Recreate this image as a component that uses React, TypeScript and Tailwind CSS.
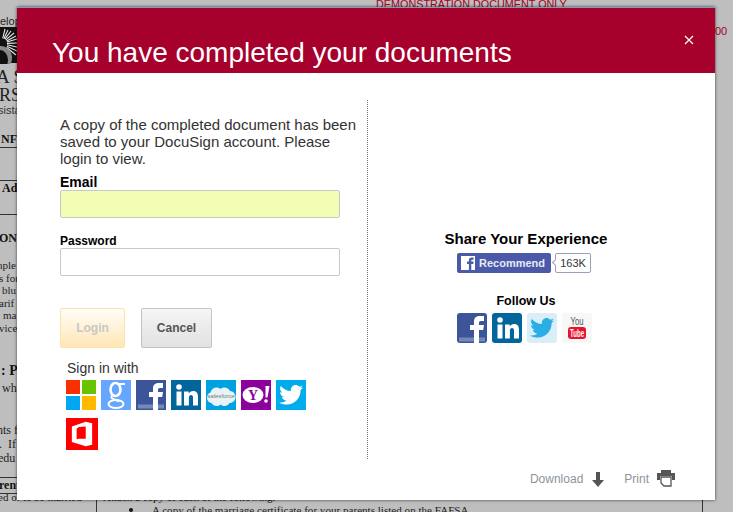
import React from "react";

type Frag = { x: number; y: number; t: string; c: string };
const frags: Frag[] = [
  { x: 0, y: 14, t: "elop", c: "font-['Liberation_Sans',sans-serif] text-[11px] text-[#222]" },
  { x: -4, y: 70, t: "A S", c: "font-['Liberation_Serif',serif] text-[19px] text-[#222]" },
  { x: -1, y: 88, t: "RSI", c: "font-['Liberation_Serif',serif] text-[18px] text-[#222]" },
  { x: -2, y: 103, t: "sista", c: "font-['Liberation_Sans',sans-serif] text-[11px] text-[#333]" },
  { x: 1, y: 132, t: "NF", c: "font-['Liberation_Serif',serif] font-bold text-[12px] text-[#111]" },
  { x: 2, y: 181, t: "Ad", c: "font-['Liberation_Serif',serif] font-bold text-[12px] text-[#111]" },
  { x: -1, y: 231, t: "ON", c: "font-['Liberation_Serif',serif] font-bold text-[12px] text-[#111]" },
  { x: -3, y: 258, t: "nple", c: "font-['Liberation_Serif',serif] text-[11px] text-[#222]" },
  { x: -1, y: 271, t: "s for", c: "font-['Liberation_Serif',serif] text-[11px] text-[#222]" },
  { x: 2, y: 283, t: "blu", c: "font-['Liberation_Serif',serif] text-[11px] text-[#222]" },
  { x: -1, y: 296, t: "arif", c: "font-['Liberation_Serif',serif] text-[11px] text-[#222]" },
  { x: 3, y: 308, t: "ma", c: "font-['Liberation_Serif',serif] text-[11px] text-[#222]" },
  { x: -1, y: 321, t: "vice", c: "font-['Liberation_Serif',serif] text-[11px] text-[#222]" },
  { x: 1, y: 364, t: ": P", c: "font-['Liberation_Serif',serif] font-bold text-[14px] text-[#111]" },
  { x: 2, y: 381, t: "wh", c: "font-['Liberation_Serif',serif] text-[12px] text-[#222]" },
  { x: -3, y: 423, t: "nts f", c: "font-['Liberation_Serif',serif] text-[12px] text-[#222]" },
  { x: -1, y: 437, t: ".  If", c: "font-['Liberation_Serif',serif] text-[12px] text-[#222]" },
  { x: -2, y: 451, t: "edu", c: "font-['Liberation_Serif',serif] text-[12px] text-[#222]" },
  { x: -1, y: 478, t: "rent", c: "font-['Liberation_Serif',serif] font-bold text-[12px] text-[#111]" },
  { x: -2, y: 490, t: "ed or to be married", c: "font-['Liberation_Serif',serif] text-[11px] text-[#222]" },
  { x: 103, y: 490, t: "Attach a copy of each of the following:", c: "font-['Liberation_Serif',serif] text-[11px] text-[#222]" },
  { x: 152, y: 503, t: "A copy of the marriage certificate for your parents listed on the FAFSA", c: "font-['Liberation_Serif',serif] text-[11.100px] text-[#222]" },
  { x: 376, y: -3, t: "DEMONSTRATION DOCUMENT ONLY", c: "font-['Liberation_Sans',sans-serif] text-[10.800px] text-[#a8001f]" },
  { x: 715, y: 24, t: "00", c: "font-['Liberation_Sans',sans-serif] text-[11px] text-[#a8001f]" },
];

const lines = [
  "left-0 top-[147px] w-[17px] h-px",
  "left-0 top-[180px] w-[17px] h-px",
  "left-0 top-[214px] w-[17px] h-px",
  "left-0 top-[477px] w-[17px] h-px",
  "left-0 top-[493px] w-[17px] h-px",
  "left-[96px] top-[500px] w-px h-[12px]",
  "left-[702px] top-[500px] w-px h-[12px]",
];

function Tile({ size = 30, r = 0, bg, children }: { size?: number; r?: number; bg: string; children: React.ReactNode }) {
  return (
    <svg width={size} height={size} viewBox="0 0 30 30" className="block shrink-0">
      <rect width="30" height="30" rx={r} fill={bg} />
      {children}
    </svg>
  );
}

const fPath = "M17 30V17h-4v-5h4V8.500C17 4.500 19.500 3 23 3h4v5h-3c-1.600 0-2 .7-2 2v2h5l-.8 5H22v13z";
const bird =
  "M27 7.400c-.9.4-1.900.7-2.800.8 1-.6 1.800-1.600 2.200-2.700-1 .6-2 1-3.100 1.200C22.300 5.700 21 5.100 19.700 5.100c-2.700 0-4.900 2.200-4.900 4.900 0 .4 0 .8.100 1.100C10.800 10.900 7.200 9 4.800 6c-.4.700-.7 1.600-.7 2.500 0 1.700.9 3.200 2.200 4.100-.8 0-1.600-.2-2.200-.6v.1c0 2.400 1.700 4.400 3.900 4.800-.7.2-1.500.2-2.200.1.600 2 2.400 3.400 4.600 3.400-1.700 1.300-3.800 2.100-6.100 2.100-.4 0-.8 0-1.200-.1 2.200 1.400 4.800 2.200 7.500 2.200 9.100 0 14-7.500 14-14v-.6c1-.7 1.800-1.600 2.500-2.500z";

function Fb({ r = 0 }: { r?: number }) {
  return (
    <Tile bg="#3b5598" r={r}>
      <path d={fPath} fill="#fff" />
      <rect x="2" y="24.500" width="26" height="4" fill="#fff" opacity=".3" />
    </Tile>
  );
}
function Li({ r = 0 }: { r?: number }) {
  return (
    <Tile bg="#02659b" r={r}>
      <circle cx="8" cy="7" r="2.800" fill="#fff" />
      <rect x="5.500" y="11.500" width="5" height="14" fill="#fff" />
      <path d="M13 11.500h4.700v2c.9-1.500 2.500-2.400 4.300-2.400 3.500 0 5 2.100 5 5.900v8.500h-5v-7.800c0-1.800-.6-2.700-1.900-2.700-1.400 0-2.200 1-2.200 2.700v7.800H13z" fill="#fff" />
    </Tile>
  );
}

function Button({ label, cls }: { label: string; cls: string }) {
  return (
    <button className={`h-10 rounded-[2px] border text-[12px] font-bold font-['Liberation_Sans',sans-serif] ${cls}`}>{label}</button>
  );
}

const rays = [
  [5, 27], [8, 28], [11, 29], [14, 31], [16, 34], [17, 37], [17, 41], [17, 45], [17, 49], [16, 53],
];

export default function App() {
  return (
    <div className="relative w-[733px] h-[512px] overflow-hidden bg-[#bebebe] font-['Liberation_Sans',sans-serif]">
      {/* page behind the overlay */}
      {frags.map((f) => (
        <span key={f.t + f.y} className={`absolute leading-[14px] whitespace-pre ${f.c}`} style={{ left: f.x, top: f.y }}>
          {f.t}
        </span>
      ))}
      {lines.map((l) => (
        <div key={l} className={`absolute bg-[#333] ${l}`} />
      ))}
      <span className="absolute left-[129px] top-[508px] size-[4px] rounded-full bg-[#111]" />
      <svg className="absolute left-0 top-0" width="17" height="64" viewBox="0 0 17 64">
        <rect y="27" width="17" height="36" fill="#111" />
        {rays.map(([x, y]) => (
          <path key={`${x}-${y}`} d={`M${0.35 * x + 1} ${0.35 * y + 29} L${x} ${y + 2}`} stroke="#e8e8e8" strokeWidth="1.100" />
        ))}
        <ellipse cx="1" cy="58" rx="11" ry="12" fill="#888" />
        <ellipse cx="0" cy="60" rx="8" ry="10" fill="#111" />
      </svg>

      {/* modal */}
      <div className="absolute left-[17px] top-[7px] w-[698px] h-[493px] bg-white flex flex-col border-t border-t-[#7f9db9] shadow-[0_0_3px_rgba(0,0,0,0.7)]">
        <header className="h-[65px] shrink-0 bg-[#a6002c] flex items-start justify-between pl-[35px] pr-[21px]">
          <h1 className="mt-[28px] text-[28px] leading-[33px] text-white">You have completed your documents</h1>
          <svg className="mt-[27px]" width="10" height="10" viewBox="0 0 10 10">
            <path d="M1 1 L9 9 M9 1 L1 9" stroke="#fff" strokeWidth="1.200" />
          </svg>
        </header>

        <main className="flex h-[359px] mt-[27px] shrink-0">
          <section className="w-[351px] border-r border-dotted border-[#777] pl-[43px] pt-[16px] shrink-0">
            <p className="w-[300px] text-[15px] leading-[17px] text-[#333]">
              A copy of the completed document has been saved to your DocuSign account. Please login to view.
            </p>
            <label className="block mt-[7px] text-[14px] leading-[16px] font-bold text-black">Email</label>
            <input className="block w-[280px] h-[28px] rounded-[2px] border border-[#c8c8c8] bg-[#f4fdb4]" />
            <label className="block mt-[16px] text-[12px] leading-[14px] font-bold text-black">Password</label>
            <input className="block w-[280px] h-[28px] rounded-[2px] border border-[#c8c8c8] bg-white" />
            <div className="flex gap-4 mt-[32px]">
              <Button label="Login" cls="w-[65px] border-[#fbe3ae] text-[#c8c8c8] bg-gradient-to-b from-[#fffdf8] to-[#ffe6b5]" />
              <Button label="Cancel" cls="w-[71px] border-[#c4c4c4] text-[#555] bg-gradient-to-b from-[#f5f5f5] to-[#e1e1e1]" />
            </div>
            <p className="mt-[12px] ml-[7px] text-[14px] leading-[16px] text-[#333]">Sign in with</p>
            <div className="flex flex-wrap gap-x-[5px] gap-y-[8px] mt-[4px] ml-[6px] w-[250px]">
              <Tile bg="#fff">
                <rect width="14" height="14" fill="#f92f00" />
                <rect x="16" width="14" height="14" fill="#68c400" />
                <rect y="16" width="14" height="14" fill="#00a8f4" />
                <rect x="16" y="16" width="14" height="14" fill="#ffba00" />
              </Tile>
              <Tile bg="#66a6ff">
                <g fill="none" stroke="#fff">
                  <ellipse cx="14.500" cy="9.500" rx="5" ry="6.500" strokeWidth="2.600" />
                  <ellipse cx="15" cy="24" rx="7.500" ry="4" strokeWidth="2" />
                  <path d="M16 4 H24" strokeWidth="2" />
                  <path d="M11 15.500 C9 18 12 19 15 20 L18 21.500" strokeWidth="2" />
                </g>
              </Tile>
              <Fb />
              <Li />
              <Tile bg="#00a1e0">
                <path d="M6 23c-3 0-5-2.500-5-5.500 0-2.500 1.500-4.500 3.500-5 .5-3 3-5 6-5 1.500 0 3 .5 4 1.500 1-1 2.500-1.500 4-1.500 2.500 0 4.500 1.500 5.500 3.500 3 .2 5.500 2.700 5.500 6 0 3.500-2.500 6-6 6-1 2-3 3-5 3-1.500 0-3-.7-4-1.500-1 1-2.500 1.500-4 1.500-2 0-4-1.200-5-3z" fill="#e8f3f8" />
                <text x="15" y="18" textAnchor="middle" fontSize="6" fill="#777" fontStyle="italic" fontFamily="'Liberation Sans', sans-serif">salesforce</text>
              </Tile>
              <Tile bg="#8c009b">
                <ellipse cx="12" cy="15" rx="10.500" ry="8" fill="#fff" />
                <text x="12" y="20" textAnchor="middle" fontSize="14" fontWeight="bold" fill="#8c009b" fontFamily="'Liberation Serif', serif">Y</text>
                <path d="M24.500 6h4l-2 11.500h-2z" fill="#fff" />
                <circle cx="25" cy="21" r="1.800" fill="#fff" />
              </Tile>
              <Tile bg="#00aced">
                <path d={bird} fill="#fff" />
              </Tile>
              <Tile size={32} bg="#ff0000">
                <path d="M5.500 8 L18.500 3.500 L24.500 5 V25 L18.500 26.500 L5.500 22.500Z M10 10 V20 L12 19.500 H18.500 V8 L12 8.500Z" fill="#fff" fillRule="evenodd" />
              </Tile>
            </div>
          </section>

          <section className="flex-1 flex flex-col items-center pt-[129px] pr-[31px]">
            <h2 className="text-[15px] leading-[20px] font-bold text-black">Share Your Experience</h2>
            <div className="flex items-center mt-[4px] h-[20px] -ml-[4px]">
              <div className="w-[94px] h-[20px] rounded-[2px] bg-[#4a5aa8] flex items-center pl-[4px] gap-[4px]">
                <svg width="14" height="14" viewBox="0 0 30 30">
                  <rect width="30" height="30" fill="#fff" />
                  <path d={fPath} fill="#4a5aa8" />
                </svg>
                <span className="text-[11px] font-bold text-[#e8ebf6]">Recommend</span>
              </div>
              <div className="relative ml-[4px] w-[36px] h-[20px] rounded-[2px] border border-[#9aa0b5] bg-white flex items-center justify-center text-[11px] text-[#333]">
                <span className="absolute -left-[3px] top-[6px] w-[5px] h-[5px] rotate-45 bg-white border-l border-b border-[#9aa0b5]" />
                163K
              </div>
            </div>
            <h3 className="mt-[20px] text-[12.500px] leading-[16px] font-bold text-black">Follow Us</h3>
            <div className="flex gap-[5px] mt-[4px] -ml-[4px]">
              <Fb r={3} />
              <Li r={3} />
              <Tile bg="#d9eef6" r={3}>
                <path d={bird} fill="#29aee6" />
              </Tile>
              <Tile bg="#f7f7f7" r={3}>
                <text x="15" y="12" textAnchor="middle" fontSize="10" fill="#555" fontFamily="'Liberation Sans', sans-serif" textLength="13" lengthAdjust="spacingAndGlyphs">You</text>
                <rect x="6" y="14" width="18" height="12" rx="3" fill="#e8122d" />
                <text x="15" y="24" textAnchor="middle" fontSize="10" fontWeight="bold" fill="#fff" fontFamily="'Liberation Sans', sans-serif" textLength="14" lengthAdjust="spacingAndGlyphs">Tube</text>
              </Tile>
            </div>
          </section>
        </main>

        <footer className="flex-1 flex items-start justify-end pr-[40px] pt-[11px] text-[12px] leading-[16px] text-[#8c949c]">
          <span className="mt-px">Download</span>
          <svg className="ml-[9px] mt-[2px]" width="12" height="15" viewBox="0 0 12 15">
            <path d="M4 0h4v8h4l-6 7-6-7h4z" fill="#555" />
          </svg>
          <span className="ml-[20px] mt-px">Print</span>
          <svg className="ml-[8px]" width="18" height="17" viewBox="0 0 18 17">
            <path d="M4 0h10v3h4v7h-3V6H3v4H0V3h4z" fill="#555" />
            <path d="M4 7h10v9H7l-3-3z" fill="#fff" stroke="#555" strokeWidth="1.300" />
          </svg>
        </footer>
      </div>
    </div>
  );
}
